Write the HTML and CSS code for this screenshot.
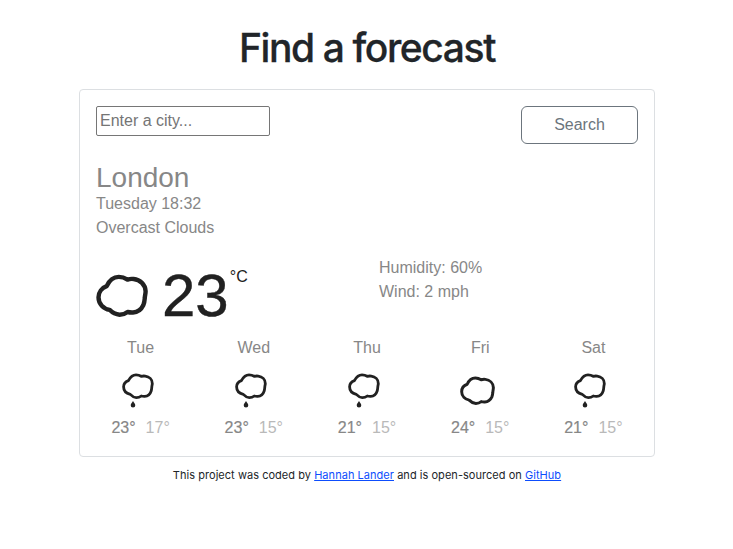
FILE: index.html
```html
<!DOCTYPE html>
<html lang="en">
<head>
<meta charset="utf-8">
<title>Find a forecast</title>
<link rel="stylesheet" href="styles.css">
</head>
<body>
<svg class="symbols" aria-hidden="true">
  <symbol id="cloud" viewBox="0 0 52 43">
    <path d="M10.7 12.2C13 7 17.5 2.9 22.8 2.9C26 2.9 29 4 31.5 5.6C33.5 4.9 35.5 4.8 37.6 5C44.2 5.7 49.3 10.6 49.6 17.2C49.6 20 48.8 21.8 48.8 24C48.6 26.5 48.3 28.8 47.4 31C45.3 35.4 41.7 38.3 37 38.5C35 38.6 33.5 38.5 31.6 38C29 40 26 40.7 23.6 40.7C19.8 40.5 16.5 38.8 13.6 35.8C7.5 34.7 2.5 30 2.5 23.3C2.5 18.2 5.8 13.9 10.7 12.2Z"/>
  </symbol>
  <symbol id="rain" viewBox="0 0 32 35">
    <path d="M6.4 7.6C8.2 4.4 10.8 1.9 14 1.9C16 1.9 17.7 2.4 19.2 3.3C20.5 3 21.8 2.9 23.2 3.1C27.3 3.6 30.3 6.6 30.3 10.4C30.3 11.7 29.9 12.6 29.8 14C29.7 15.4 29.6 16.8 29.1 18.2C28.1 21.7 25.7 23.3 22.7 23.4C21.4 23.5 20.3 23.3 19.3 23C17.5 24.4 15.9 24.7 14.3 24.7C12.2 24.6 10.1 23.3 8.3 21.4C4.5 20.5 1.6 17.6 1.6 13.8C1.6 11 3.6 8.6 6.4 7.6Z"/>
    <path class="drop" d="M11 28C12 29.6 13.3 30.8 13.3 32.2A2.3 2.3 0 0 1 8.7 32.2C8.7 30.8 10 29.6 11 28Z"/>
  </symbol>
</svg>
<main class="container">
  <h1>Find a forecast</h1>
  <section class="card">
    <form class="search">
      <input type="text" placeholder="Enter a city...">
      <button type="button">Search</button>
    </form>
    <h2>London</h2>
    <div class="line">Tuesday 18:32</div>
    <div class="line">Overcast Clouds</div>
    <div class="current">
      <div class="now">
        <svg class="icon-now"><use href="#cloud"/></svg>
        <span class="temp">23</span><span class="unit">°C</span>
      </div>
      <div class="details">
        <div class="line">Humidity: 60%</div>
        <div class="line">Wind: 2 mph</div>
      </div>
    </div>
    <div class="week">
      <div class="day"><div>Tue</div><div class="pic"><svg class="icon-rain"><use href="#rain"/></svg></div><div class="range"><span class="high">23°</span><span class="low">17°</span></div></div>
      <div class="day"><div>Wed</div><div class="pic"><svg class="icon-rain"><use href="#rain"/></svg></div><div class="range"><span class="high">23°</span><span class="low">15°</span></div></div>
      <div class="day"><div>Thu</div><div class="pic"><svg class="icon-rain"><use href="#rain"/></svg></div><div class="range"><span class="high">21°</span><span class="low">15°</span></div></div>
      <div class="day"><div>Fri</div><div class="pic"><svg class="icon-cloud"><use href="#cloud"/></svg></div><div class="range"><span class="high">24°</span><span class="low">15°</span></div></div>
      <div class="day"><div>Sat</div><div class="pic"><svg class="icon-rain"><use href="#rain"/></svg></div><div class="range"><span class="high">21°</span><span class="low">15°</span></div></div>
    </div>
  </section>
  <footer>This project was coded by <a href="#">Hannah Lander</a> and is open-sourced on <a href="#">GitHub</a></footer>
</main>
</body>
</html>
```
FILE: styles.css
```css
* { box-sizing: border-box; }
body {
  margin: 0;
  background: #fff;
  color: #878787;
  font: 16px/24px "Liberation Sans", Arial, sans-serif;
}
.symbols { position: absolute; width: 0; height: 0; }
.container { width: 576px; margin: 0 auto 0 79px; padding-top: 24px; }
h1 {
  margin: 0 0 17px;
  color: #212529;
  font: 500 39px/48px Inter, sans-serif;
  letter-spacing: -1.4px;
  text-align: center;
  -webkit-text-stroke: .3px;
}
.card {
  height: 368px;
  padding: 16px;
  border: 1px solid #dcdfe2;
  border-radius: 4px;
}
.search { display: flex; justify-content: space-between; align-items: flex-start; }
input {
  width: 174px;
  height: 30px;
  padding: 1px 3px;
  border: 1px solid #767676;
  border-radius: 2px;
  background: #fff;
  font: inherit;
}
input::placeholder { color: #757575; }
button {
  width: 117px;
  height: 38px;
  padding: 0;
  border: 1px solid #6c757d;
  border-radius: 6px;
  background: #fff;
  color: #6c757d;
  font: inherit;
}
h2 { margin: 18px 0 -2px; font-size: 28px; font-weight: 400; line-height: 32px; }
.current { display: flex; margin-top: 16px; }
.now { display: flex; width: 283px; height: 80px; }
.details { flex: 1; }
svg { fill: none; stroke: #212121; stroke-linejoin: round; }
.icon-now { width: 52px; height: 43px; margin-top: 18px; stroke-width: 4.4; }
.temp {
  margin-left: 14px;
  color: #212121;
  font-size: 60px;
  line-height: 80px;
  -webkit-text-stroke: .4px;
}
.unit { color: #212121; margin: 9px 0 0 1px; }
.week { display: flex; margin: 0 -12px; }
.day { flex: 1; text-align: center; }
.pic { display: flex; justify-content: center; height: 56px; }
.icon-rain { width: 32px; height: 35px; margin: 13px 6px 0 0; stroke-width: 2.8; }
.icon-cloud { width: 35px; height: 29px; margin: 16px 6px 0 0; stroke-width: 4.4; }
.drop { fill: #212121; stroke: none; }
.range { display: flex; justify-content: center; gap: 10px; }
.high { -webkit-text-stroke: .2px; }
.low { color: #b9b9b9; }
footer {
  margin-top: 10px;
  color: #212529;
  font: 11px/16px Inter, sans-serif;
  letter-spacing: .04px;
  text-align: center;
}
a { color: #0d4dfd; text-decoration: underline; }
```
